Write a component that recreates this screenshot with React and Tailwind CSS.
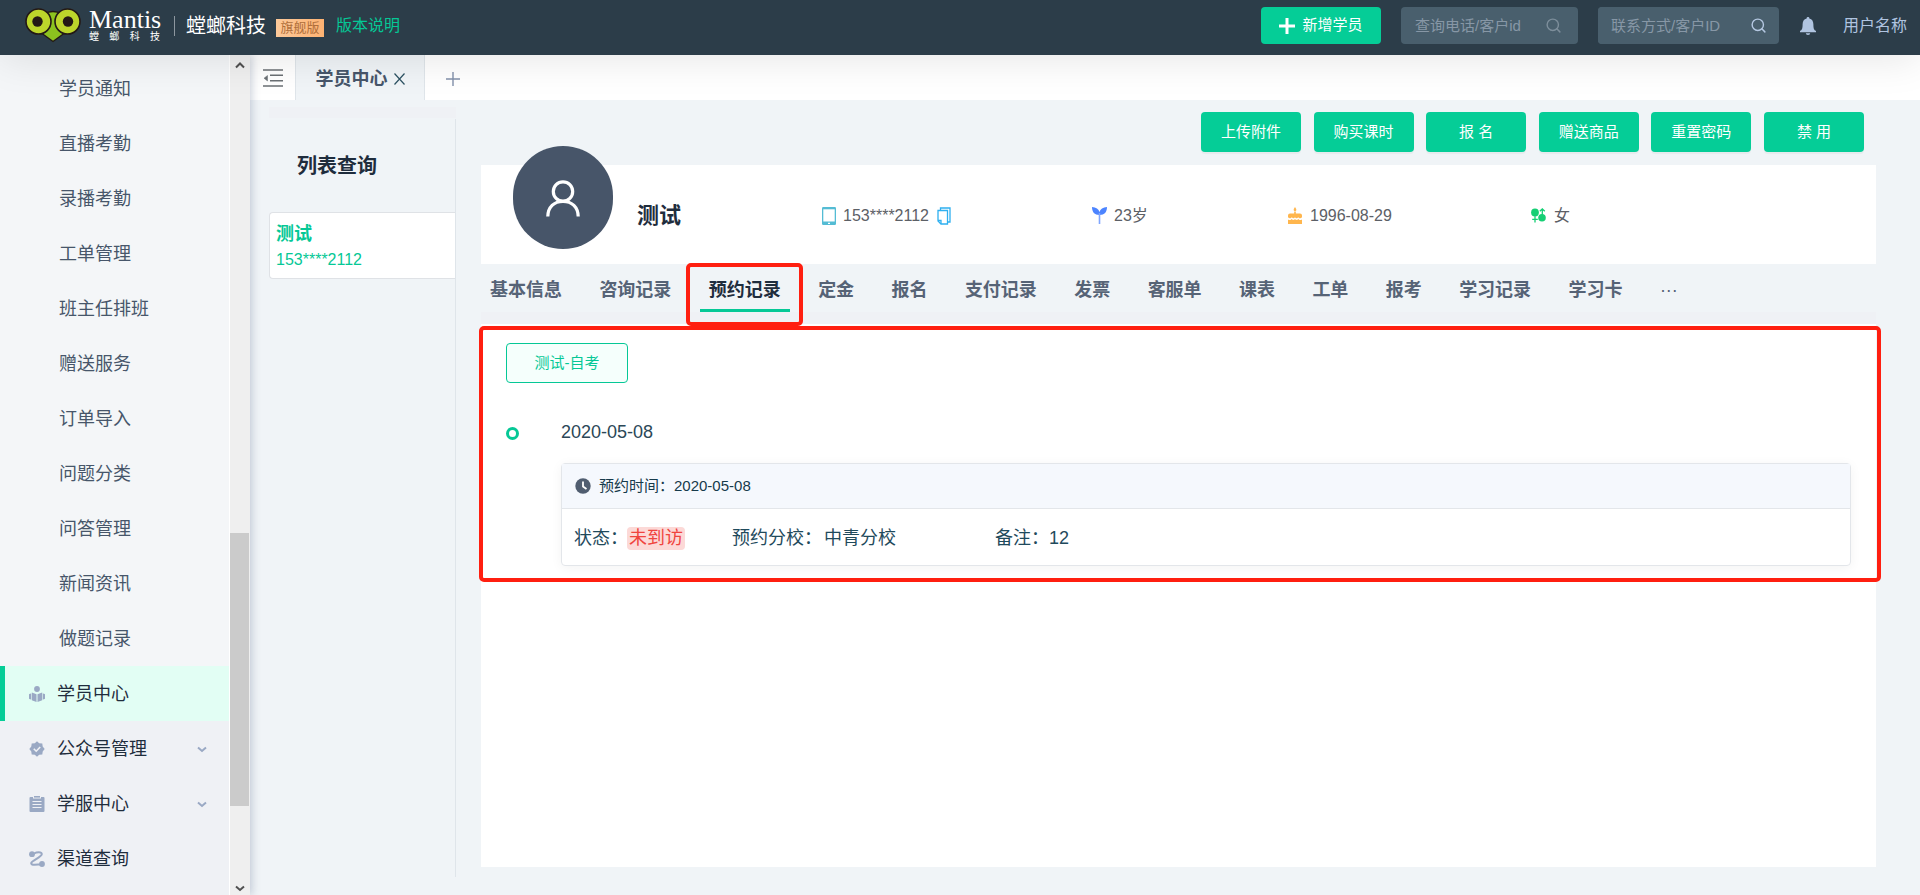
import { Search } from 'lucide-react';

const subItems = ['学员通知', '直播考勤', '录播考勤', '工单管理', '班主任排班', '赠送服务', '订单导入', '问题分类', '问答管理', '新闻资讯', '做题记录'];
const actions = ['上传附件', '购买课时', '报 名', '赠送商品', '重置密码', '禁 用'];
const tabs = ['基本信息', '咨询记录', '预约记录', '定金', '报名', '支付记录', '发票', '客服单', '课表', '工单', '报考', '学习记录', '学习卡'];

function Logo() {
  return (
    <svg viewBox="0 0 56 36" className="h-9 w-14 shrink-0" aria-hidden="true">
      <path d="M19 6 Q28 1 37 6 L41 24 L28 33.5 L15 24 Z" fill="#8cc21f" stroke="#231815" strokeWidth="1.4" />
      <circle cx="13.5" cy="13.5" r="12.5" fill="#bcd52b" stroke="#231815" strokeWidth="1.6" />
      <circle cx="42.5" cy="13.5" r="12.5" fill="#bcd52b" stroke="#231815" strokeWidth="1.6" />
      <circle cx="12.500" cy="13.5" r="5.200" fill="#231815" />
      <circle cx="43" cy="13.5" r="5.200" fill="#231815" />
    </svg>
  );
}

function ReaderIcon() {
  return (
    <svg viewBox="0 0 16 16" className="size-4" fill="#9aa9c4" aria-hidden="true">
      <circle cx="8" cy="3" r="2.900" />
      <path d="M2.800 6.600 7.500 8.300V16L2.800 14.300Z M13.200 6.600 8.500 8.300V16l4.700-1.700Z" />
      <path d="M2.200 7.500A3 3 0 0 0 2.200 13.500Z M13.800 7.500a3 3 0 0 1 0 6Z" />
    </svg>
  );
}

function BadgeIcon() {
  return (
    <svg viewBox="0 0 16 16" className="size-4" fill="#9aa9c4" aria-hidden="true">
      <path d="M8 0.300 10.200 2.200 13.300 2.500 13.700 5.600 15.700 8 13.700 10.400 13.300 13.500 10.200 13.800 8 15.700 5.800 13.800 2.700 13.500 2.300 10.400 0.300 8 2.300 5.600 2.700 2.500 5.800 2.200Z" />
      <path d="M4.800 7.800 7.200 10.200 11.200 6" fill="none" stroke="#eff1f5" strokeWidth="1.600" />
    </svg>
  );
}

function ClipboardIcon() {
  return (
    <svg viewBox="0 0 16 16" className="size-4" fill="#9aa9c4" aria-hidden="true">
      <path d="M1.500 1H4V2.500H12V1h2.500a1 1 0 0 1 1 1V15a1 1 0 0 1-1 1h-13a1 1 0 0 1-1-1V2a1 1 0 0 1 1-1Z" />
      <rect x="5" y="0" width="6" height="1.600" />
      <path d="M3.500 5.500h9M3.500 8.500h9M3.500 11.500h9" stroke="#eff1f5" strokeWidth="1.200" />
    </svg>
  );
}

function RouteIcon() {
  return (
    <svg viewBox="0 0 16 16" className="size-4" aria-hidden="true">
      <circle cx="3" cy="3.200" r="2.900" fill="#9aa9c4" />
      <circle cx="13" cy="13" r="2.900" fill="#9aa9c4" />
      <path d="M5 2.500C8 .8 12.500 0.500 12.800 3 13 6 2.500 9.500 2.200 12 2.100 14.400 6 13.800 11 13.500" fill="none" stroke="#9aa9c4" strokeWidth="2" />
    </svg>
  );
}

function Chevron({ className, d = 'M1 2.500 5 6 9 2.500', w = 2 }) {
  return (
    <svg viewBox="0 0 10 8" className={className} fill="none" stroke="currentColor" strokeWidth={w} aria-hidden="true">
      <path d={d} />
    </svg>
  );
}

const mainItems = [
  { label: '学员中心', Icon: ReaderIcon, active: true },
  { label: '公众号管理', Icon: BadgeIcon, more: true },
  { label: '学服中心', Icon: ClipboardIcon, more: true },
  { label: '渠道查询', Icon: RouteIcon },
];

function Header() {
  return (
    <header className="relative z-10 flex h-[55px] items-center bg-[#2c3d49] pr-[13px] pb-1 pl-[25px] shadow-[0_4px_40px_rgba(0,0,0,0.1)]">
      <Logo />
      <div className="ml-2 w-[71px]">
        <div className="font-['Liberation_Serif',serif] text-[26px] leading-[23px] text-white">Mantis</div>
        <div className="flex justify-between text-[10px] leading-[12px] text-white">
          <span>螳</span><span>螂</span><span>科</span><span>技</span>
        </div>
      </div>
      <div className="ml-[14px] h-5 w-px bg-[#8d979f]" />
      <div className="ml-[11px] text-xl text-white">螳螂科技</div>
      <div className="mt-1 ml-[10px] h-[18px] w-12 bg-linear-to-r from-[#fcc99a] to-[#fdb272] text-center text-[13px] leading-[18px] text-[#b06f3a]">旗舰版</div>
      <a href="#version" className="ml-3 text-base text-[#05c896]">版本说明</a>
      <div className="grow" />
      <button className="flex h-[37px] w-[120px] items-center justify-center gap-[7px] rounded bg-[#05cd97] text-[15px] text-white">
        <svg viewBox="0 0 16 16" className="size-4" aria-hidden="true"><path d="M8 0V16M0 8H16" stroke="#fff" strokeWidth="3" /></svg>
        新增学员
      </button>
      <div className="ml-5 flex h-[37px] w-[177px] items-center rounded bg-[#495f6d]">
        <input aria-label="查询电话/客户id" placeholder="查询电话/客户id" className="h-full w-0 grow bg-transparent pl-[14px] text-[15px] text-white outline-none placeholder:text-[#8797a6]" />
        <button aria-label="查询电话" className="mr-4 text-[#7d8e9b]"><Search size={17} strokeWidth={2} /></button>
      </div>
      <div className="ml-5 flex h-[37px] w-[181px] rounded bg-[#495f6d]">
        <input aria-label="联系方式/客户ID" placeholder="联系方式/客户ID" className="h-full w-0 grow rounded-l bg-[#495f6d] pl-[13px] text-[15px] text-white outline-none placeholder:text-[#8797a6]" />
        <button aria-label="搜索联系方式" className="flex w-10 items-center justify-center rounded text-[#b5c8e2]"><Search size={17} strokeWidth={2} /></button>
      </div>
      <button aria-label="通知" className="ml-[21px]">
        <svg viewBox="0 0 16 18" className="h-[18px] w-4" fill="#b0c4e0" aria-hidden="true">
          <path d="M8 0a1.300 1.300 0 0 1 1.300 1.500C12.200 2.100 13.400 4.500 13.400 7.500c0 4 .6 5.500 2.600 6.500v1.300H0V14c2-1 2.600-2.500 2.600-6.500 0-3 1.200-5.400 4.100-6A1.300 1.300 0 0 1 8 0ZM5.800 16.200h4.400a2.200 1.800 0 0 1-4.400 0Z" />
        </svg>
      </button>
      <button className="ml-[27px] text-base text-[#b0c4e0]">用户名称</button>
    </header>
  );
}

function Sidebar() {
  return (
    <aside className="relative flex w-[250px] shrink-0 shadow-[2px_0_8px_rgba(60,80,120,0.25)]">
      <nav className="flex w-[230px] flex-col border-r border-white bg-[#f4f6f8] pt-[6px]">
        {subItems.map((t) => (
          <a key={t} href="#sub" className="flex h-[55px] shrink-0 items-center pl-[59px] text-lg text-[#47566a]">{t}</a>
        ))}
        {mainItems.map(({ label, Icon, active, more }) => (
          <a
            key={label}
            href="#main"
            className={`flex h-[55px] shrink-0 grow-0 items-center border-l-[5px] pl-6 text-lg text-[#1f2d3d] ${active ? 'border-[#05cd97] bg-[#e2fef4]' : 'border-[#eff1f5] bg-[#eff1f5]'}`}
          >
            <Icon />
            <span className="ml-3 grow">{label}</span>
            {more && <Chevron className="mr-[22px] h-2 w-[10px] text-[#9aa9c4]" />}
          </a>
        ))}
        <div className="grow bg-[#eff1f5]" />
      </nav>
      <div className="flex w-5 flex-col items-center bg-[#efefef] pt-[6px]">
        <Chevron className="h-2 w-[10px] text-[#505050]" d="M1 6.500 5 2.500 9 6.500" />
        <div className="grow-463" />
        <div className="h-[273px] w-[19px] self-start bg-[#cbcbcb]" />
        <div className="grow-78" />
        <Chevron className="mb-[3px] h-2 w-[10px] text-[#505050]" />
      </div>
    </aside>
  );
}

function TabBar() {
  return (
    <div className="flex h-[45px] shrink-0 bg-white">
      <button aria-label="收起菜单" className="flex w-[45px] items-center justify-center">
        <svg viewBox="0 0 20 18" className="h-[18px] w-5" stroke="#6b7074" strokeWidth="1.600" aria-hidden="true">
          <path d="M0 1H20M7 6.300H20M7 11.700H20M0 17H20" />
          <path d="M4.500 6.500V12L1 9.200Z" fill="#6b7074" strokeWidth="0.500" />
        </svg>
      </button>
      <div className="flex w-[130px] items-center justify-center gap-[6px] border-x border-[#dfe5ea] bg-[#f0f4f7] pt-[3px]">
        <span className="text-lg font-bold text-[#47566a]">学员中心</span>
        <button aria-label="关闭" className="text-[#2c5262]">
          <svg viewBox="0 0 11 12" className="h-3 w-[11px]" stroke="currentColor" strokeWidth="1.200" aria-hidden="true"><path d="M.5.5 10.500 11.500M10.500.5.5 11.500" /></svg>
        </button>
      </div>
      <button aria-label="新标签" className="ml-[21px] pt-[2px] text-[#8291ab]">
        <svg viewBox="0 0 14 14" className="size-[14px]" stroke="currentColor" strokeWidth="1.400" aria-hidden="true"><path d="M7 0V14M0 7H14" /></svg>
      </button>
    </div>
  );
}

function ListPanel() {
  return (
    <section className="mb-[18px] ml-[19px] flex w-[187px] shrink-0 flex-col pt-[7px]">
      <div className="h-[11px] bg-[#eff1f5]" />
      <div className="mt-px grow border-r border-[#dfe5ea]">
        <h2 className="pt-8 pl-7 text-xl leading-[30px] font-bold text-[#1f2d3d]">列表查询</h2>
        <a href="#student" className="mt-[31px] block h-[67px] rounded-l border border-r-0 border-[#dfe2e6] bg-white pt-2 pl-[6px] text-[#05c896]">
          <div className="text-lg leading-[26px] font-bold">测试</div>
          <div className="text-base leading-[26px]">153****2112</div>
        </a>
      </div>
    </section>
  );
}

function Profile() {
  return (
    <div className="grid h-[99px] grid-cols-[341px_270px_196px_243px_1fr] items-center bg-white pt-[2px] text-base text-[#5c6066]">
      <div className="flex items-center">
        <div className="-mt-[36px] ml-8 flex h-[103px] w-[100px] items-center justify-center rounded-full bg-[#475569]">
          <svg viewBox="0 0 34 37" className="mt-px h-[37px] w-[34px]" fill="none" stroke="#fff" strokeWidth="3.200" aria-hidden="true">
            <circle cx="17" cy="11.500" r="9.700" />
            <path d="M1.800 36.500C2 27 8 21.500 17 21.500S32 27 32.200 36.500" />
          </svg>
        </div>
        <h1 className="ml-6 text-[22px] font-bold text-[#1f2d3d]">测试</h1>
      </div>
      <div className="flex items-center">
        <svg viewBox="0 0 14 18" className="h-[18px] w-[14px]" aria-hidden="true">
          <rect width="14" height="18" rx="1.200" fill="#54bcd4" />
          <rect x="1.300" y="2.300" width="11.400" height="12.200" fill="#fff" />
          <path d="M6 16.300h2" stroke="#fff" strokeWidth="1.300" />
        </svg>
        <span className="ml-[7px]">153****2112</span>
        <button aria-label="复制" className="ml-2">
          <svg viewBox="0 0 14 18" className="h-[18px] w-[14px]" fill="none" stroke="#2fb0f0" strokeWidth="1.300" aria-hidden="true">
            <path d="M3.500 3V1H13V15H11" />
            <path d="M1 3.500H10.500V17H4L1 14Z" />
            <path d="M1 13.500H4V17" />
          </svg>
        </button>
      </div>
      <div className="flex items-center">
        <svg viewBox="0 0 15 17" className="h-[17px] w-[15px]" aria-hidden="true">
          <path d="M0 0C4 .3 6.800 2 7.500 5 8.200 2 11 .3 15 0c0 5-2.500 8-7.500 8S0 5 0 0Z" fill="#4c84ff" />
          <path d="M7.500 6V17" stroke="#7fa6ff" strokeWidth="1.600" />
        </svg>
        <span className="ml-[7px]">23岁</span>
      </div>
      <div className="flex items-center">
        <svg viewBox="0 0 14 17" className="h-[17px] w-[14px]" fill="#ffb64d" aria-hidden="true">
          <path d="M7 0c2 2.500 1.500 4 0 4S5 2.500 7 0Z" />
          <path d="M6.200 4.500h1.600v2H12a2 2 0 0 1 2 2V10.200c-1.500 1.800-3 1-3.700 0-1.300 1.500-2.500 1.500-3.300 0-.8 1.500-2 1.500-3.300 0C3 11.200 1.500 12 0 10.200V8.500a2 2 0 0 1 2-2h4.200Z" />
          <path d="M0 12.500c2 1 3 .3 3.700-.5 1 1.200 2.300 1.200 3.300 0 1 1.200 2.300 1.200 3.300 0 .7.800 1.700 1.500 3.700.5V17H0Z" />
        </svg>
        <span className="ml-2">1996-08-29</span>
      </div>
      <div className="flex items-center">
        <svg viewBox="0 0 15 15" className="size-[15px]" fill="#15cf74" stroke="#15cf74" aria-hidden="true">
          <circle cx="4" cy="4.400" r="3.900" stroke="none" />
          <circle cx="11" cy="9.800" r="3.800" stroke="none" />
          <path d="M4 8V14.500M1.200 11.300H6.800M11.300 7V1M8.800 3.200 11.300 .9 13.800 3.200" fill="none" strokeWidth="1.300" />
        </svg>
        <span className="ml-2">女</span>
      </div>
    </div>
  );
}

function Tabs() {
  return (
    <div className="border-b-[12px] border-[#eff1f5] bg-[#f0f4f7]">
      <div className="flex h-12 justify-between pr-[198px] pl-[9px] text-lg">
        {tabs.map((t) =>
          t === '预约记录' ? (
            <div key={t} className="relative">
              <button className="h-[51px] font-bold text-[#1f2d3d]">{t}</button>
              <div className="absolute top-[45px] -right-[9px] -left-[9px] h-[3px] bg-[#05c896]" />
              <div className="absolute -top-px -right-[22px] -left-[23px] z-10 h-[63px] rounded-[5px] border-4 border-[#ff1f10]" />
            </div>
          ) : (
            <button key={t} className="h-[51px] font-bold text-[#566376]">{t}</button>
          ),
        )}
        <button aria-label="更多" className="h-[51px] text-[#566376]">···</button>
      </div>
    </div>
  );
}

function Records() {
  return (
    <div className="relative grow bg-white pr-[25px] pl-[25px]">
      <div className="absolute top-[2px] -right-[5px] -left-[2px] h-[256px] rounded-[5px] border-4 border-[#ff1f10]" />
      <button className="mt-[19px] block h-10 w-[122px] rounded border border-[#05c896] bg-[#f5fffc] text-[15px] text-[#05c896]">测试-自考</button>
      <div className="mt-9 flex items-center">
        <div className="mt-[2px] size-[13px] rounded-full border-[3px] border-[#05c896]" />
        <div className="ml-[42px] text-lg leading-[26px] text-[#2b4757]">2020-05-08</div>
      </div>
      <article className="mt-[18px] ml-[55px] rounded border border-[#e3e6ea] text-[#1f4a5c] shadow-[0_2px_12px_rgba(0,0,0,0.05)]">
        <div className="flex h-[45px] items-center border-b border-[#e3e6ea] bg-[#f5f8fd] pl-[13px] text-[15px] text-[#163a4b]">
          <svg viewBox="0 0 16 16" className="mr-2 size-4" aria-hidden="true">
            <circle cx="8" cy="8" r="7.700" fill="#505d70" />
            <path d="M8 3.500V8.500L11.500 11" fill="none" stroke="#fff" strokeWidth="1.800" />
          </svg>
          预约时间：2020-05-08
        </div>
        <div className="flex h-14 items-center pt-[3px] pl-3 text-lg leading-[23px]">
          <div className="flex w-[158px]">状态：<span className="-ml-px rounded-sm bg-[#fcd9d7] px-[2px] text-[#f0443e]">未到访</span></div>
          <div className="w-[263px]">预约分校：<span className="ml-[2px]">中青分校</span></div>
          <div>备注：12</div>
        </div>
      </article>
    </div>
  );
}

export default function App() {
  return (
    <div className="flex h-screen flex-col overflow-hidden bg-[#f0f4f7] font-['Liberation_Sans','Noto_Sans_CJK_SC',sans-serif]">
      <Header />
      <div className="flex min-h-0 grow">
        <Sidebar />
        <div className="flex min-w-0 grow flex-col">
          <TabBar />
          <div className="flex min-h-0 grow">
            <ListPanel />
            <main className="mr-11 mb-7 ml-[25px] flex min-w-0 grow flex-col">
              <div className="mr-3 ml-auto flex h-[65px] w-[663px] shrink-0 items-start justify-between pt-3">
                {actions.map((t) => (
                  <button key={t} className="h-10 w-[100px] rounded bg-[#05cd97] text-[15px] text-white shadow-[0_2px_1px_rgba(0,0,0,0.04)]">{t}</button>
                ))}
              </div>
              <Profile />
              <Tabs />
              <Records />
            </main>
          </div>
        </div>
      </div>
    </div>
  );
}
